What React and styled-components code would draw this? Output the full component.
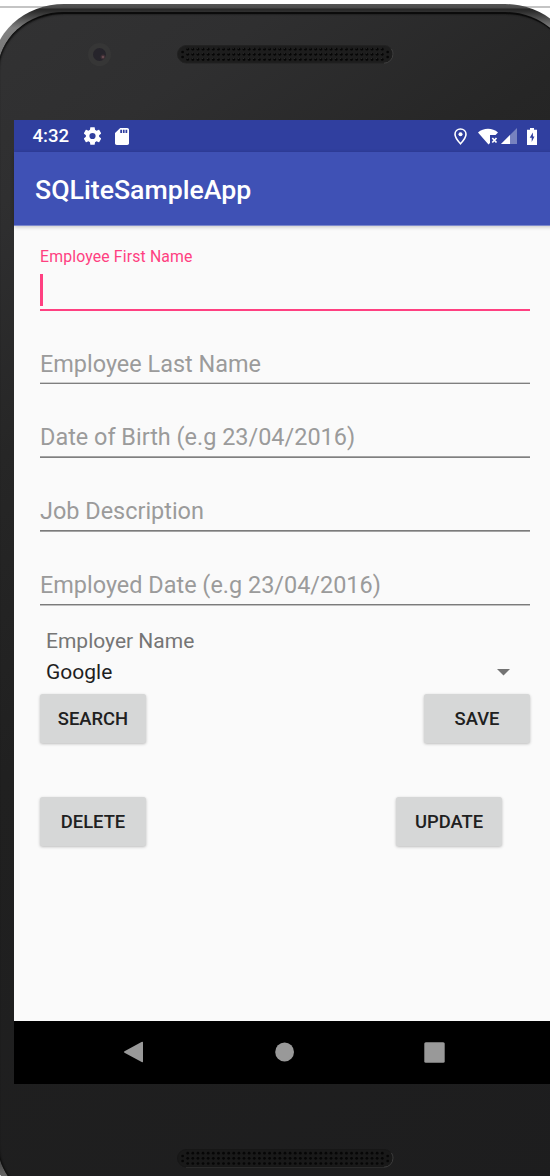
import React from 'react';
import styled, { createGlobalStyle } from 'styled-components';

const Global = createGlobalStyle`
  * { box-sizing: border-box; }
  html, body { margin: 0; background: #fff; overflow: hidden; }
  body { font-family: Roboto, "Liberation Sans", sans-serif; }
`;

const Page = styled.main`
  width: 550px;
  height: 1176px;
  overflow: hidden;
  padding-top: 4px;
  background: linear-gradient(#fff 6px, #c4c4c4 6px, #c4c4c4 8px, #fff 8px);
`;

const Shell = styled.div`
  width: 585px;
  height: 1206px;
  margin-left: -8px;
  padding: 8px 6px 6px;
  border-radius: 72px / 66px;
  background: linear-gradient(#555 0, #484848 4px, #262626 5px, #303030 8px, #808080 24px, #777 60px, #303030 110px, #242424 1140px, #777 1180px);
`;

const Face = styled.div`
  height: 1192px;
  padding: 0 16px;
  border-radius: 66px / 59px;
  border-top: 2px solid #0b0b0b;
  box-shadow: inset 1px 0 2px #0b0b0b;
  background: linear-gradient(145deg, #323233 0%, #2f2f30 12%, #262626 28%, #202020 48%, #1d1d1e 100%);
`;

const TopBezel = styled.div`
  height: 106px;
  padding: 29px 0 0 74px;
  display: flex;
  align-items: flex-start;
  gap: 66px;
`;

const Camera = styled.div`
  width: 23px;
  height: 23px;
  border: 5px solid #363636;
  border-radius: 50%;
  background: radial-gradient(circle at 10px 9px, #846065 0, #443238 1.5px, transparent 3px), #26242b;
`;

const BottomBezel = styled.div`
  padding: 65px 0 0 163px;
`;

const SpeakerSvg = styled.svg`
  display: block;
  margin-top: ${(p) => p.$top || 0}px;
`;

const Screen = styled.div`
  width: 541px;
  height: 964px;
  display: flex;
  flex-direction: column;
  background: #fafafa;
`;

const StatusBar = styled.div`
  height: 32px;
  padding: 0 18px 0 18.5px;
  display: flex;
  align-items: center;
  background: #303f9f;
  color: #fff;
`;

const Clock = styled.span`
  width: 51px;
  font-size: 18.6px;
  font-weight: 500;
  line-height: 32px;
`;

const StatusIcon = styled.svg`
  flex: none;
  display: block;
  margin-left: ${(p) => p.$gap || 0}px;
`;

const Spacer = styled.div`
  flex: 1;
`;

const AppBar = styled.header`
  height: 74px;
  padding: 2px 0 0 21px;
  display: flex;
  align-items: center;
  background: #3f51b5;
  color: #fff;
  border-bottom: 1px solid #7c88cb;
  box-shadow: 0 1px 4px rgba(0, 0, 0, 0.22);
  font-size: 26.7px;
  font-weight: 500;
  line-height: 74px;
`;

const Form = styled.form`
  flex: 1;
  display: flex;
  flex-direction: column;
  padding: 20px 25px 0 26px;
`;

const FocusedField = styled.div`
  height: 65px;
  border-bottom: 2px solid #ff4081;
`;

const FloatingLabel = styled.label`
  display: block;
  color: #ff4081;
  font-size: 15.8px;
  line-height: 22px;
  letter-spacing: 0.15px;
`;

const Caret = styled.div`
  width: 3px;
  height: 32px;
  margin-top: 6px;
  background: #ff4081;
`;

const Field = styled.div`
  height: ${(p) => p.$height || 74}px;
  padding-bottom: ${(p) => p.$lift || 5}px;
  display: flex;
  align-items: flex-end;
  background: linear-gradient(${(p) => p.$upper} 50%, ${(p) => p.$lower} 50%) bottom / 100% 2px no-repeat;
  color: #9b9b9b;
  font-size: 23.45px;
  line-height: 32px;
`;

const SpinnerLabel = styled.div`
  margin: 20px 0 0 6px;
  height: 31px;
  color: #757575;
  font-size: 21px;
  line-height: 31px;
`;

const Spinner = styled.div`
  height: 30px;
  padding: 0 20px 0 6px;
  display: flex;
  justify-content: space-between;
  align-items: center;
  color: #1f1f1f;
  font-size: 21px;
  line-height: 30px;
`;

const Actions = styled.div`
  display: flex;
  justify-content: space-between;
  margin-top: ${(p) => p.$top}px;
  padding-right: ${(p) => p.$inset || 0}px;
`;

const Button = styled.button`
  width: 106px;
  height: 49px;
  padding: 0;
  border: 0;
  border-radius: 2.5px;
  background: #d6d7d7;
  box-shadow: 0 1px 3px rgba(0, 0, 0, 0.25);
  color: #202020;
  font: 500 18.4px/49px Roboto, sans-serif;
`;

const NavBar = styled.nav`
  height: 63px;
  padding: 0 110px 1px 109px;
  display: flex;
  align-items: center;
  justify-content: space-between;
  background: #000;
`;

const columns = Array.from({ length: 39 }, (_, i) => 10.7 + i * 5.12);
const rows = [4.2, 9.3, 14.5];

function Speaker({ lower }) {
  return (
    <SpeakerSvg width="217" height="20" viewBox="0 0 217 20" $top={lower ? 0 : 2}>
      <rect x="0.5" y="0.5" width="215.5" height="17.5" rx="8.75" fill={lower ? '#191919' : '#1d1d1d'} stroke={lower ? '#171717' : '#222'} />
      <path d="M207 18.2a9 9 0 0 0 9-9c0-2-.6-4-1.8-5.4" fill="none" stroke="#484848" strokeWidth="0.8" />
      {lower && <path d="M9 18.5h198" stroke="#333" strokeWidth="0.7" />}
      <g fill="#060606">
        {columns.map((x) => rows.map((y) => <circle key={`${x}-${y}`} cx={x} cy={y} r="1.35" />))}
        <circle cx="5.6" cy="7" r="1.35" />
        <circle cx="5.6" cy="12" r="1.35" />
        <circle cx="210.7" cy="7" r="1.35" />
        <circle cx="210.7" cy="12" r="1.35" />
      </g>
      {!lower && (
        <g fill="#454545">
          {columns.map((x) => rows.map((y) => <circle key={`${x}-${y}`} cx={x - 0.5} cy={y - 1} r="0.45" />))}
        </g>
      )}
    </SpeakerSvg>
  );
}

export default function App() {
  return (
    <Page>
      <Global />
      <Shell>
        <Face>
          <TopBezel>
            <Camera />
            <Speaker />
          </TopBezel>
          <Screen>
            <StatusBar>
              <Clock>4:32</Clock>
              <StatusIcon width="17" height="18" viewBox="2.4 2 19.2 20" fill="#fff">
                <path d="M19.43 12.98c.04-.32.07-.64.07-.98s-.03-.66-.07-.98l2.11-1.65c.19-.15.24-.42.12-.64l-2-3.46c-.12-.22-.39-.3-.61-.22l-2.49 1c-.52-.4-1.08-.73-1.69-.98l-.38-2.65C14.46 2.18 14.25 2 14 2h-4c-.25 0-.46.18-.49.42l-.38 2.65c-.61.25-1.17.59-1.69.98l-2.49-1c-.23-.09-.49 0-.61.22l-2 3.46c-.13.22-.07.49.12.64l2.11 1.65c-.04.32-.07.65-.07.98s.03.66.07.98l-2.11 1.65c-.19.15-.24.42-.12.64l2 3.46c.12.22.39.3.61.22l2.49-1c.52.4 1.08.73 1.69.98l.38 2.65c.03.24.24.42.49.42h4c.25 0 .46-.18.49-.42l.38-2.65c.61-.25 1.17-.59 1.69-.98l2.49 1c.23.09.49 0 .61-.22l2-3.46c.12-.22.07-.49-.12-.64l-2.11-1.65zM12 15.5A3.5 3.5 0 1 1 12 8.5a3.5 3.5 0 0 1 0 7z" />
              </StatusIcon>
              <StatusIcon $gap={14} width="14" height="17" viewBox="4 2 16 20" preserveAspectRatio="none" fill="#fff">
                <path d="M18 2h-8L4.02 8 4 20c0 1.1.9 2 2 2h12c1.1 0 2-.9 2-2V4c0-1.1-.9-2-2-2zm-6 6h-2V4h2v4zm3 0h-2V4h2v4zm3 0h-2V4h2v4z" />
              </StatusIcon>
              <Spacer />
              <StatusIcon width="13" height="17" viewBox="0 0 13 17">
                <path d="M6.5 1C3.300 1 1 3.300 1 6.300c0 3.700 5.500 9.500 5.500 9.500S12 10 12 6.300C12 3.300 9.700 1 6.500 1z" fill="none" stroke="#fff" strokeWidth="1.600" />
                <circle cx="6.500" cy="6.300" r="2" fill="#fff" />
              </StatusIcon>
              <StatusIcon $gap={11} width="20" height="17" viewBox="0 0 20 17">
                <path d="M0 4.500C5.500-.5 14.500-.5 20 4.500L17.500 7H12v8l-1.500 1.500z" fill="#fff" />
                <path d="M14.300 10l4.200 4.500M18.500 10l-4.200 4.500" stroke="#fff" strokeWidth="1.700" />
              </StatusIcon>
              <StatusIcon $gap={3} width="16" height="16" viewBox="0 0 16 16">
                <path d="M16 0v16H0z" fill="#7782bf" />
                <path d="M9 7v9H0z" fill="#fff" />
              </StatusIcon>
              <StatusIcon $gap={10} width="10" height="17" viewBox="0 0 10 17">
                <path d="M3 0h4v1.700h3V17H0V1.700h3z" fill="#fff" />
                <path d="M5.900 4.500L2.700 9.800h2v4.200L7.500 8.600H5.900z" fill="#303f9f" />
              </StatusIcon>
            </StatusBar>
            <AppBar>SQLiteSampleApp</AppBar>
            <Form onSubmit={(e) => e.preventDefault()}>
              <FocusedField>
                <FloatingLabel>Employee First Name</FloatingLabel>
                <Caret />
              </FocusedField>
              <Field $height={73} $lift={4} $upper="#cdcdcd" $lower="#7f7f7f">Employee Last Name</Field>
              <Field $upper="#a4a4a4" $lower="#7f7f7f">Date of Birth (e.g 23/04/2016)</Field>
              <Field $upper="#7b7b7b" $lower="#a4a4a4">Job Description</Field>
              <Field $upper="#7b7b7b" $lower="#c0c0c0">Employed Date (e.g 23/04/2016)</Field>
              <SpinnerLabel>Employer Name</SpinnerLabel>
              <Spinner>
                Google
                <svg width="13" height="7" viewBox="0 0 13 7">
                  <path d="M0 0h13L6.500 6.500z" fill="#737373" />
                </svg>
              </Spinner>
              <Actions $top={7}>
                <Button type="button">SEARCH</Button>
                <Button type="button">SAVE</Button>
              </Actions>
              <Actions $top={54} $inset={28}>
                <Button type="button">DELETE</Button>
                <Button type="button">UPDATE</Button>
              </Actions>
            </Form>
            <NavBar>
              <svg width="20" height="22" viewBox="0 0 20 22">
                <path d="M18.500 1Q20 .2 20 1.500v19q0 1.300-1.300.5L1.500 11.800q-1.300-.8 0-1.600z" fill="#999" />
              </svg>
              <svg width="20" height="20" viewBox="0 0 20 20">
                <circle cx="10.600" cy="10" r="9.400" fill="#999" />
              </svg>
              <svg width="21" height="21" viewBox="0 0 21 21">
                <rect x="0.300" y="0.300" width="20.400" height="20.400" rx="1.500" fill="#999" />
              </svg>
            </NavBar>
          </Screen>
          <BottomBezel>
            <Speaker lower />
          </BottomBezel>
        </Face>
      </Shell>
    </Page>
  );
}
